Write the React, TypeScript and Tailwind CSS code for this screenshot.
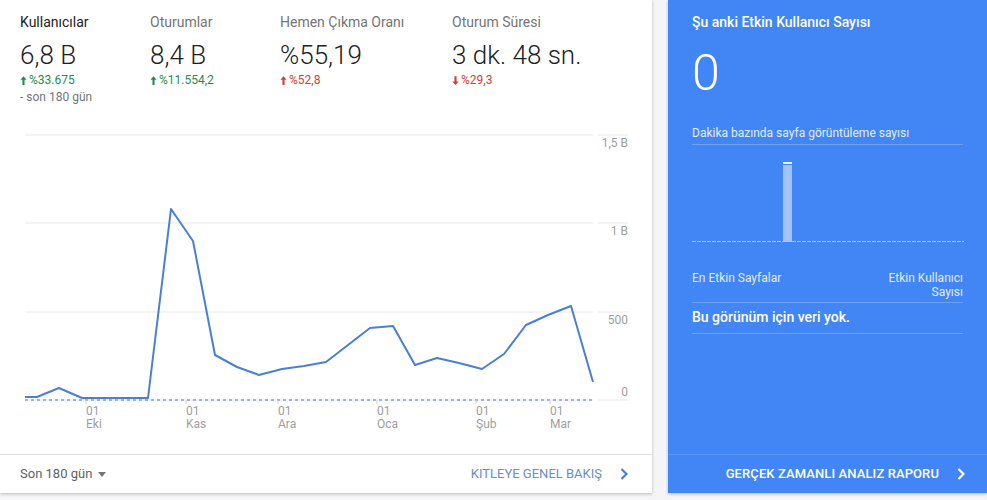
import React from 'react';

const METRICS = [
  { label: 'Kullanıcılar', value: '6,8 B', change: '%33.675', up: true, good: true, note: '- son 180 gün', active: true, width: 'w-[130px]' },
  { label: 'Oturumlar', value: '8,4 B', change: '%11.554,2', up: true, good: true, width: 'w-[130px]' },
  { label: 'Hemen Çıkma Oranı', value: '%55,19', change: '%52,8', up: true, good: false, width: 'w-[172px]' },
  { label: 'Oturum Süresi', value: '3 dk. 48 sn.', change: '%29,3', up: false, good: false, width: 'w-[180px]' },
];

// weekly user counts, already in chart pixels (x, y)
const POINTS: [number, number][] = [
  [25, 277], [37, 277], [59, 268], [82, 278], [104, 278], [126, 278], [148, 278],
  [171, 89], [193, 121], [215, 235], [237, 247], [259, 255], [282, 249], [304, 246],
  [326, 242], [348, 225], [370, 208], [393, 206], [415, 245], [437, 238], [459, 243],
  [482, 249], [504, 234], [526, 205], [548, 195], [571, 186], [593, 262],
];

const MONTHS = [
  { x: 93, name: 'Eki' },
  { x: 193, name: 'Kas' },
  { x: 285, name: 'Ara' },
  { x: 384, name: 'Oca' },
  { x: 483, name: 'Şub' },
  { x: 557, name: 'Mar' },
];

const GRID = [
  { y: 15, label: '1,5 B', ly: 27 },
  { y: 103, label: '1 B', ly: 115 },
  { y: 192, label: '500', ly: 204 },
  { y: 280, label: '0', ly: 276 },
];

function Arrow({ up }: { up: boolean }) {
  return (
    <svg viewBox="0 0 8 10" className="w-[7px] h-[9px]" fill="currentColor">
      {up ? (
        <path d="M4 0 L7.5 4 H5.2 V10 H2.8 V4 H0.5 Z" />
      ) : (
        <path d="M4 10 L7.5 6 H5.2 V0 H2.8 V6 H0.5 Z" />
      )}
    </svg>
  );
}

function Chevron({ className }: { className: string }) {
  return (
    <svg viewBox="0 0 8 12" className={`w-[8px] h-[12px] ${className}`} fill="none" stroke="currentColor" strokeWidth="2.2">
      <path d="M1.5 1 L6.5 6 L1.5 11" />
    </svg>
  );
}

function UsersChart() {
  const line = POINTS.map(([x, y]) => `${x},${y}`).join(' ');
  return (
    <svg width="652" height="320" className="block" style={{ fontFamily: 'Roboto, sans-serif' }}>
      {GRID.map((g) => (
        <g key={g.label}>
          <line x1="25" x2="593" y1={g.y} y2={g.y} stroke="#e8e8e8" strokeWidth="1" />
          <line x1="598" x2="628" y1={g.y} y2={g.y} stroke="#e8e8e8" strokeWidth="1" />
          <text x="628" y={g.ly} textAnchor="end" fontSize="12" fill="#9e9e9e">
            {g.label}
          </text>
        </g>
      ))}
      <line x1="25" x2="593" y1="280" y2="280" stroke="#7d9fd9" strokeWidth="1.5" strokeDasharray="3 3" />
      <polyline points={line} fill="none" stroke="#4a7fd6" strokeWidth="2" strokeLinejoin="round" />
      {MONTHS.map((m) => (
        <g key={m.name}>
          <line x1={m.x - 7} x2={m.x - 7} y1="280" y2="284" stroke="#d0d0d0" />
          <text x={m.x - 7} y="295" fontSize="12" fill="#9e9e9e">01</text>
          <text x={m.x - 7} y="308" fontSize="12" fill="#9e9e9e">{m.name}</text>
        </g>
      ))}
    </svg>
  );
}

function PageviewBars() {
  return (
    <svg width="272" height="92" className="block">
      <rect x="91" y="14" width="9" height="77" fill="#a3c2fa" />
      <rect x="91" y="11" width="9" height="2" fill="#e8f0fe" />
      <line x1="0" x2="272" y1="90.5" y2="90.5" stroke="#a9c6f9" strokeWidth="1" strokeDasharray="4 1" />
    </svg>
  );
}

export default function App() {
  return (
    <div
      className="w-[987px] h-[500px] bg-[#f5f5f7] flex gap-[16px] overflow-hidden"
      style={{ fontFamily: 'Roboto, "Liberation Sans", sans-serif' }}
    >
      {/* audience overview card */}
      <div className="w-[652px] h-[493px] bg-white shadow-[0_1px_3px_rgba(0,0,0,0.25)] flex flex-col">
        <div className="flex px-[20px] pt-[12px] h-[120px]">
          {METRICS.map((m) => (
            <div key={m.label} className={`${m.width} flex flex-col`}>
              <span className={`text-[14px] leading-[20px] ${m.active ? 'text-[#212121]' : 'text-[#757575]'}`}>
                {m.label}
              </span>
              <span className="text-[26px] leading-[32px] font-light text-[#212121] mt-[7px]">{m.value}</span>
              <span
                className={`flex items-center gap-[2px] text-[12px] leading-[16px] mt-[1px] ${
                  m.good ? 'text-[#1e8e4e]' : 'text-[#d23f31]'
                }`}
              >
                <Arrow up={m.up} />
                {m.change}
              </span>
              {m.note && <span className="text-[12px] leading-[18px] text-[#757575]">{m.note}</span>}
            </div>
          ))}
        </div>
        <UsersChart />
        <div className="mt-auto h-[39px] border-t border-[#e0e0e0] flex items-center justify-between pl-[20px] pr-[24px]">
          <button type="button" className="flex items-center gap-[6px] text-[13px] text-[#616161]">
            Son 180 gün
            <span className="w-0 h-0 border-l-[4px] border-r-[4px] border-t-[5px] border-l-transparent border-r-transparent border-t-[#757575]" />
          </button>
          <a className="flex items-center gap-[18px] text-[13px] text-[#6a8ec8] uppercase">
            KITLEYE GENEL BAKIŞ
            <Chevron className="text-[#4f7fd2]" />
          </a>
        </div>
      </div>

      {/* realtime card */}
      <div className="w-[319px] h-[493px] bg-[#4285f4] shadow-[0_1px_3px_rgba(0,0,0,0.25)] flex flex-col text-white">
        <div className="px-[24px] pt-[12px] flex flex-col">
          <span className="text-[14px] leading-[20px] font-medium">Şu anki Etkin Kullanıcı Sayısı</span>
          <span className="text-[50px] leading-[50px] font-light mt-[16px]">0</span>
          <span className="text-[12px] leading-[16px] text-[#e3ecfd] mt-[27px] pb-[3px] border-b border-[#6ea2f7]">
            Dakika bazında sayfa görüntüleme sayısı
          </span>
          <div className="mt-[6px]">
            <PageviewBars />
          </div>
          <div className="flex justify-between text-[12px] leading-[14px] text-[#e3ecfd] mt-[28px] pb-[3px] border-b border-[#6ea2f7]">
            <span>En Etkin Sayfalar</span>
            <span className="text-right">
              Etkin Kullanıcı
              <br />
              Sayısı
            </span>
          </div>
          <div className="text-[14px] leading-[20px] font-medium pt-[4px] pb-[6px] border-b border-[#6ea2f7]">
            Bu görünüm için veri yok.
          </div>
        </div>
        <div className="mt-auto h-[39px] border-t border-[#5893f5] flex items-center justify-end gap-[18px] pr-[22px]">
          <span className="text-[13px] font-medium tracking-[0.1px]">GERÇEK ZAMANLI ANALIZ RAPORU</span>
          <Chevron className="text-white" />
        </div>
      </div>
    </div>
  );
}
